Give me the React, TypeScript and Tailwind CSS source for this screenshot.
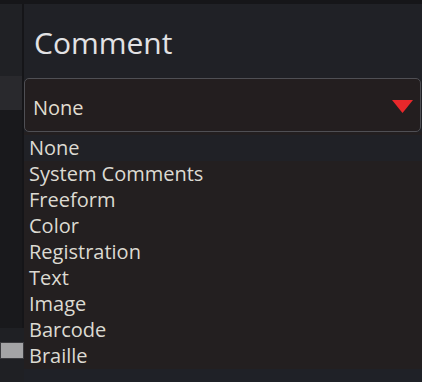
const options = [
  "None",
  "System Comments",
  "Freeform",
  "Color",
  "Registration",
  "Text",
  "Image",
  "Barcode",
  "Braille",
];

const App = () => {
  return (
    <div
      className="w-[422px] h-[382px] overflow-hidden flex flex-col bg-[#202126]"
      style={{ fontFamily: '"Open Sans", "Noto Sans", sans-serif' }}
    >
      <div className="h-[4px] bg-[#161619] shrink-0" />
      <div className="flex flex-1">
        {/* side strip */}
        <div className="w-[24px] flex flex-col shrink-0">
          <div className="h-[72px] bg-[#202125] border-r-2 border-[#151518]" />
          <div className="h-[34px] bg-[#29292d] border-r-2 border-[#151518]" />
          <div className="h-[218px] bg-[#19191c] border-r-2 border-[#151518]" />
          <div className="h-[14px] bg-[#1f2024]" />
          <div className="h-[17px] bg-[#a4a4a6] border border-[#3a3a3e]" />
          <div className="flex-1 bg-[#1f2024]" />
        </div>

        {/* panel */}
        <div className="flex-1 flex flex-col">
          <div className="h-[74px] flex items-center pl-[10px] pt-[4px]">
            <h3 className="text-[30px] leading-none text-[#e2e2e4]">Comment</h3>
          </div>
          <div className="h-[54px] mr-[1px] rounded-[5px] border border-[#4f4f54] bg-[#231e1f] flex items-center justify-between pl-[8px] pr-[7px]">
            <span className="text-[20px] leading-none text-[#e0dccf] pt-[5px]">None</span>
            <svg width="21" height="13" viewBox="0 0 21 13" className="mt-[2px]">
              <polygon points="0,0 21,0 10.5,13" fill="#e8282b" />
            </svg>
          </div>
          <div className="flex flex-col pt-[3px] bg-[#231f20]">
            {options.map((opt, i) => (
              <div
                key={opt}
                className={
                  i === 0
                    ? "h-[26px] flex items-center px-[5px] bg-[#202126] text-[20px] leading-none text-[#dcdad2]"
                    : "h-[26px] flex items-center px-[5px] text-[20px] leading-none text-[#dcdad2]"
                }
              >
                {opt}
              </div>
            ))}
          </div>
          <div className="flex-1 bg-[#1f2127]" />
        </div>
      </div>
    </div>
  );
};

export default App;
